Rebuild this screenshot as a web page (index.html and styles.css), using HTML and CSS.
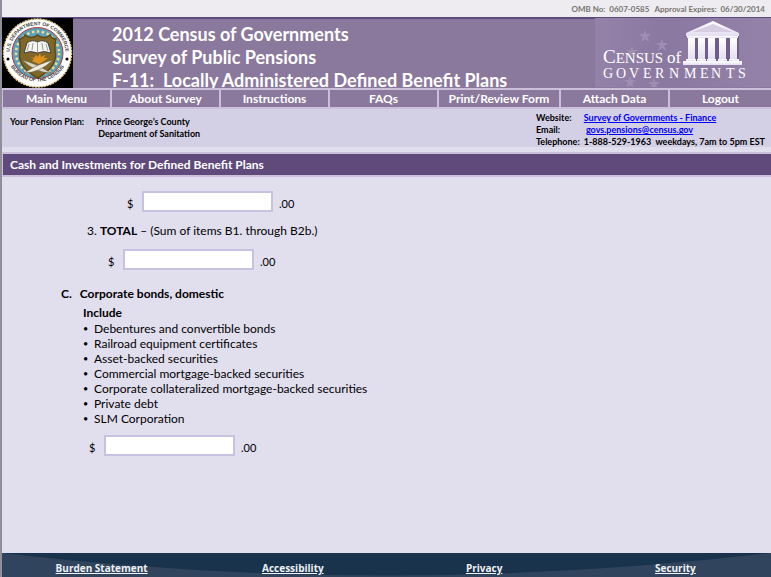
FILE: index.html
```
<!DOCTYPE html>
<html lang="en">
<head>
    <meta charset="UTF-8">
    <meta name="viewport" content="width=device-width, initial-scale=1.0">
    <title>2012 Census of Governments - Survey of Public Pensions</title>
    <link rel="stylesheet" href="styles.css">
</head>
<body>
    <div class="omb">
        <span>OMB No:&nbsp; 0607-0585</span>
        <span>Approval Expires:&nbsp; 06/30/2014</span>
    </div>

    <header class="banner">
        <svg class="seal" viewBox="0 0 71 70" role="img" aria-label="U.S. Department of Commerce, Bureau of the Census">
            <defs>
                <path id="arcTop" d="M8.6 43 A28 28 0 1 1 62.4 43"/>
                <path id="arcBottom" d="M5 38 A31 31 0 0 0 66 38"/>
            </defs>
            <rect width="71" height="70" fill="#000"/>
            <circle cx="35.500" cy="35" r="34" fill="#fff" stroke="#ecd28c" stroke-width="1.500" stroke-dasharray="2 1"/>
            <circle cx="35.500" cy="35" r="25.500" fill="#5d9fb8" stroke="#b23b3b" stroke-width="1"/>
            <circle cx="35.500" cy="35" r="21.500" fill="none" stroke="#f1dd92" stroke-width="2.500" stroke-dasharray="2.500 2.500"/>
            <path d="M17 21 Q21 21 23 17 Q29 22 35.500 17 Q42 22 48 17 Q50 21 54 21 Q52 28 53.500 36 Q54 50 35.500 60 Q17 50 17.500 36 Q19 28 17 21Z" fill="#806727" stroke="#5c4a18" stroke-width="1.500"/>
            <path d="M25 25 Q30 21 35.500 24 Q41 21 46 25 L49 35 Q42 32 35.500 35 Q29 32 22 35Z" fill="#f5f5f0" stroke="#444" stroke-width="1"/>
            <path d="M35.500 24V35M27 26L25 33M31 25L30 32M40 25L41 32M44 26L46 33" stroke="#999" stroke-width="1" fill="none"/>
            <path d="M20 42 Q33 45 49 55 Q34 55 20 42Z" fill="#d9d6c6" stroke="#5c5238" stroke-width="0.500"/>
            <path d="M51 42 Q38 45 22 55 Q37 55 51 42Z" fill="#eeecdf" stroke="#5c5238" stroke-width="0.500"/>
            <path d="M34 37l2 2 2-4 1 4 4-2-1 3 4 0-4 3-5 3-7-3 2-2-4-2 4 1z" fill="#e0921f"/>
            <circle cx="6" cy="41" r="1.500"/>
            <circle cx="65" cy="41" r="1.500"/>
            <text class="seal-text"><textPath href="#arcTop" startOffset="50%" text-anchor="middle">U.S. DEPARTMENT OF COMMERCE</textPath></text>
            <text class="seal-text"><textPath href="#arcBottom" startOffset="50%" text-anchor="middle">BUREAU OF THE CENSUS</textPath></text>
        </svg>
        <h1>2012 Census of Governments<br>Survey of Public Pensions<br>F-11:&nbsp; Locally Administered Defined Benefit Plans</h1>
        <svg class="logo" viewBox="0 0 176 69" role="img" aria-label="Census of Governments">
            <defs>
                <linearGradient id="logoBg" x1="0" y1="0" x2="1" y2="0">
                    <stop offset="0" stop-color="#9482a9"/>
                    <stop offset="0.4" stop-color="#8b78a1"/>
                    <stop offset="1" stop-color="#9482a9"/>
                </linearGradient>
                <linearGradient id="stone" x1="0" y1="0" x2="0" y2="1">
                    <stop offset="0" stop-color="#fff"/>
                    <stop offset="1" stop-color="#e4def0"/>
                </linearGradient>
                <path id="star" d="M0-6 1.500-2 6-2 2.300 1 4 6 0 3-4 6-2.300 1-6-2-1.500-2Z"/>
            </defs>
            <rect width="176" height="69" fill="url(#logoBg)"/>
            <g fill="#9f8db2">
                <use href="#star" x="50" y="18"/>
                <use href="#star" x="67" y="27"/>
                <use href="#star" x="37" y="34"/>
                <use href="#star" x="35" y="64"/>
                <use href="#star" x="59" y="66"/>
            </g>
            <path d="M94 18H144V44H94Z" fill="#715d8b"/>
            <g fill="url(#stone)">
                <path d="M91 15 L118 3 L144 15 V18 H91Z"/>
                <path d="M92 18H143V20H92Z"/>
                <path d="M93 20H100V42H93ZM103 20H110V42H103ZM113 20H120V42H113ZM124 20H131V42H124ZM135 20H142V42H135Z"/>
                <path d="M91 41H101V43H91ZM102 41H111V43H102ZM112 41H121V43H112ZM123 41H132V43H123ZM134 41H144V43H134Z"/>
                <path d="M88 43H147V47H88Z"/>
            </g>
            <path d="M97 14 L118 6 L138 14Z" fill="#d8cee4"/>
            <text class="logo-text" x="8" y="45"><tspan class="logo-cap">C</tspan>ENSUS</text>
            <text class="logo-of" x="72" y="45">of</text>
            <text class="logo-wide" x="8 21 34 48 60 74 89 105 116 131 143" y="60">GOVERNMENTS</text>
        </svg>
    </header>

    <nav class="menu">
        <a href="#">Main Menu</a>
        <a href="#">About Survey</a>
        <a href="#">Instructions</a>
        <a href="#">FAQs</a>
        <a href="#">Print/Review Form</a>
        <a href="#">Attach Data</a>
        <a href="#">Logout</a>
    </nav>

    <section class="info">
        <div class="plan">
            <span>Your Pension Plan:</span>
            <span>Prince George’s County<br>&nbsp;Department of Sanitation</span>
        </div>
        <dl class="contact">
            <dt>Website:</dt>
            <dd><a href="#">Survey of Governments - Finance</a></dd>
            <dt>Email:</dt>
            <dd>&nbsp;<a href="#">govs.pensions@census.gov</a></dd>
            <dt>Telephone:</dt>
            <dd>1-888-529-1963&nbsp; weekdays, 7am to 5pm EST</dd>
        </dl>
    </section>

    <h2 class="section-title">Cash and Investments for Defined Benefit Plans</h2>

    <main>
        <form>
            <div class="amount amount-sub">
                <label for="itemB2b">$</label>
                <input type="text" id="itemB2b">
                <span>.00</span>
            </div>
            <p class="total">3. <b>TOTAL</b> – (Sum of items B1. through B2b.)</p>
            <div class="amount amount-total">
                <label for="itemB3">$</label>
                <input type="text" id="itemB3">
                <span>.00</span>
            </div>

            <h3><span>C.</span>Corporate bonds, domestic</h3>
            <div class="include">
                <h4>Include</h4>
                <ul>
                    <li>Debentures and convertible bonds</li>
                    <li>Railroad equipment certificates</li>
                    <li>Asset-backed securities</li>
                    <li>Commercial mortgage-backed securities</li>
                    <li>Corporate collateralized mortgage-backed securities</li>
                    <li>Private debt</li>
                    <li>SLM Corporation</li>
                </ul>
            </div>
            <div class="amount amount-bonds">
                <label for="itemC">$</label>
                <input type="text" id="itemC">
                <span>.00</span>
            </div>
        </form>
    </main>

    <footer>
        <svg class="swoosh" viewBox="0 0 769 24" preserveAspectRatio="none" aria-hidden="true">
            <path d="M0 0 Q385 45 769 0 V24 H0Z" fill="#30455d"/>
        </svg>
        <a href="#">Burden Statement</a>
        <a href="#">Accessibility</a>
        <a href="#">Privacy</a>
        <a href="#">Security</a>
    </footer>
</body>
</html>
```
FILE: styles.css
```
* {
    box-sizing: border-box;
}

body, h1, h2, h3, h4, ul, p, dl, dd {
    margin: 0;
    padding: 0;
}

body {
    display: flex;
    flex-direction: column;
    min-height: 100vh;
    border-left: 2px solid #918e9b;
    font-family: Lato, Calibri, sans-serif;
    font-size: 12px;
    line-height: 15px;
    color: #000;
    background-color: #e1deee;
}

/* Top strip */
.omb {
    display: flex;
    justify-content: flex-end;
    gap: 5px;
    padding: 2px 6px 0 0;
    height: 17px;
    font-size: 8px;
    font-weight: bold;
    color: #77746f;
    background-color: #eeecf1;
}

/* Banner */
.banner {
    display: flex;
    background-color: #8a799c;
    border-top: 1px solid #604a7b;
}

.seal {
    flex: none;
    width: 71px;
    height: 70px;
}

.seal-text {
    font: bold 5px "Liberation Sans", Arial, sans-serif;
    fill: #444;
}

.banner h1 {
    flex: 1;
    padding: 4px 0 0 39px;
    border-top: 1px solid #604a7b;
    font-size: 18px;
    line-height: 23px;
    height: 70px;
    white-space: nowrap;
    color: #fff;
}

.logo {
    flex: none;
    width: 176px;
    height: 69px;
}

.logo text {
    fill: #fff;
    font-family: "Liberation Serif", "Times New Roman", serif;
}

.logo-text {
    font-size: 15px;
}

.logo-cap {
    font-size: 19px;
}

.logo-of {
    font-size: 17px;
}

.logo-wide {
    font-size: 14px;
}

/* Menu */
.menu {
    display: grid;
    grid-template-columns: 107fr 107fr 107fr 107fr 120fr 107fr 101fr;
    gap: 2px;
    padding: 2px 0 2px 1px;
    background-color: #cbbfda;
}

.menu a {
    font-size: 12px;
    font-weight: bold;
    line-height: 17px;
    text-align: center;
    white-space: nowrap;
    text-decoration: none;
    color: #fff;
    background-color: #8a799c;
}

/* Plan and contact details */
.info {
    display: flex;
    justify-content: space-between;
    padding: 3px 6px 0 8px;
    height: 38px;
    font-size: 9px;
    font-weight: bold;
    line-height: 12px;
    background-color: #d3cfe4;
}

.plan {
    display: flex;
    gap: 12px;
    padding-top: 4px;
}

.contact {
    display: grid;
    grid-template-columns: auto auto;
    column-gap: 4px;
    align-content: start;
}

.contact a {
    color: #0000ff;
}

.section-title {
    margin-top: 5px;
    padding-left: 7px;
    border: 2px solid #cbbfda;
    border-width: 2px 0 2px 1px;
    font-size: 12px;
    line-height: 21px;
    color: #fff;
    background-color: #604a7b;
}

/* Form */
main {
    flex: 1;
    padding: 14px 0 24px;
}

.amount {
    display: flex;
    align-items: flex-end;
    font-size: 11px;
    line-height: 16px;
}

.amount label {
    width: 15px;
}

.amount input {
    width: 131px;
    height: 21px;
    padding: 0 4px;
    border: 2px solid #c8c1e0;
    font: inherit;
    background-color: #fff;
}

.amount span {
    padding-left: 6px;
}

.amount-sub {
    padding-left: 125px;
}

.amount-total {
    padding-left: 106px;
}

.amount-bonds {
    padding: 9px 0 0 87px;
}

.total {
    padding: 11px 0 11px 85px;
}

h3 {
    display: flex;
    gap: 8px;
    padding: 16px 0 4px 59px;
    font-size: 12px;
}

.include {
    padding-left: 81px;
}

h4 {
    padding-bottom: 1px;
    font-size: 12px;
}

ul {
    list-style: none;
}

li {
    display: flex;
}

li::before {
    content: "•";
    width: 11px;
    font-size: 9px;
}

/* Footer */
footer {
    position: relative;
    display: grid;
    grid-template-columns: repeat(4, 1fr);
    justify-items: center;
    padding: 8px 0 0 4px;
    height: 24px;
    font-family: "Open Sans", Verdana, sans-serif;
    font-size: 10px;
    font-weight: bold;
    background-color: #1a334d;
}

footer a {
    position: relative;
    color: #eef1f5;
}

.swoosh {
    position: absolute;
    top: 0;
    left: 0;
    width: 100%;
    height: 100%;
}
```
